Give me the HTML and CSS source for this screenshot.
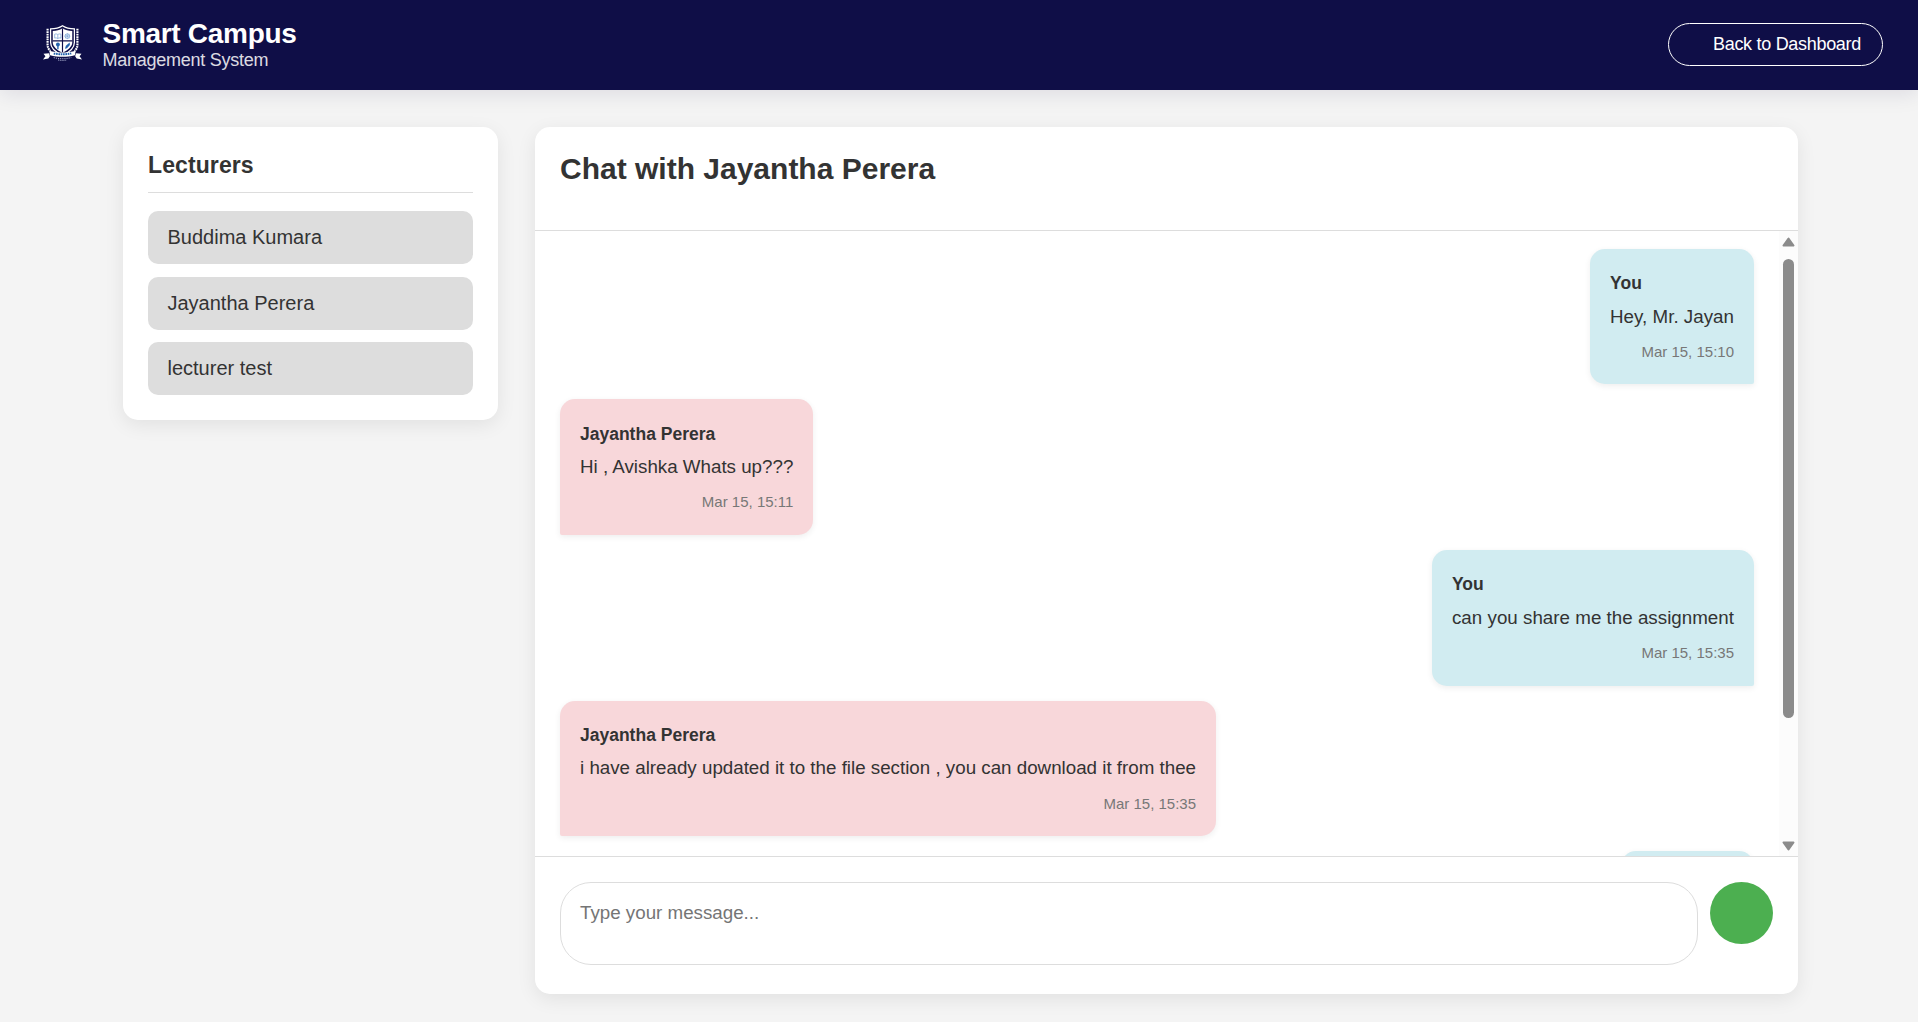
FILE: index.html
```html
<!DOCTYPE html>
<html lang="en">
<head>
<meta charset="utf-8">
<title>Smart Campus Management System</title>
<link rel="stylesheet" href="styles.css">
</head>
<body>
<header class="topbar">
  <div class="brand">
    <svg class="crest" viewBox="0 0 40 40" aria-hidden="true">
      <path d="M20 2.800C16 5.500 12 6 7.800 6V20c0 5.500 5 10 12.200 13C27.200 30 32.200 25.500 32.200 20V6C28 6 24 5.500 20 2.800z" fill="#0f0e47" stroke="#fff" stroke-width="1.300"/>
      <path d="M20 5.500C17 7.400 14 8.200 10 8.300V20c0 4 4.500 8 10 10.500 5.500-2.500 10-6.500 10-10.500V8.300C26 8.200 23 7.400 20 5.500z" fill="#fff"/>
      <path d="M20 5.500v25M9.800 18.300h20.400" stroke="#0f0e47" stroke-width="1.200"/>
      <path d="M12 11.500c1.200-.5 2.300-.3 3.200.4 1-.7 2-.9 3.200-.4v4c-1.200-.4-2.200-.2-3.200.4-1-.6-2-.8-3.200-.4zM15.200 12v4" fill="none" stroke="#6b9ad0" stroke-width=".7"/>
      <circle cx="25" cy="13.500" r="2.400" fill="none" stroke="#6b9ad0" stroke-width=".7"/>
      <path d="M22 13.500h6M25 10.500v6M22.800 11.500l4.400 4M27.200 11.500l-4.400 4" stroke="#6b9ad0" stroke-width=".5"/>
      <circle cx="15.300" cy="22" r="2" fill="#2463ad"/><path d="M15.300 23v4" stroke="#2463ad" stroke-width="1.400"/>
      <path d="M22.500 26.500l1-3.200 3.800-3.200.3 2.400-3 3.400z" fill="#2463ad"/>
      <path d="M4.700 6v16c0 3 1 5 3 6.500M35.300 6v16c0 3-1 5-3 6.500" fill="none" stroke="#fff" stroke-width="2.200" stroke-dasharray="1.800 .7"/>
      <path d="M6.300 31L.5 31.500l2 2.500-2.500 3.500 5.500-1 1.500-2.500zM33.700 31l5.800.5-2 2.500 2.500 3.500-5.500-1-1.500-2.500z" fill="#fff"/>
      <path d="M6.500 28.500c8 2.500 19 2.500 27 0l-.8 4.500c-8 2.200-17.400 2.200-25.400 0z" fill="#fff"/>
      <path d="M11 31.200c6 1.200 12 1.200 18 0" fill="none" stroke="#2463ad" stroke-width="2" stroke-dasharray="1.700 .7"/>
      <path d="M11 35.500c6 1.500 12 1.500 18 0M15.500 38c3 .5 6 .5 9 0" fill="none" stroke="#aab0cf" stroke-width="1" stroke-dasharray="1.200 1"/>
    </svg>
    <div class="brand-text">
      <div class="brand-name">Smart Campus</div>
      <div class="brand-sub">Management System</div>
    </div>
  </div>
  <a class="back">Back to Dashboard</a>
</header>
<main class="layout">
  <aside class="sidebar">
    <h2 class="sidebar-title">Lecturers</h2>
    <ul class="lecturers">
      <li class="lecturer">Buddima Kumara</li>
      <li class="lecturer">Jayantha Perera</li>
      <li class="lecturer">lecturer test</li>
    </ul>
  </aside>
  <section class="chat">
    <div class="chat-head"><h1 class="chat-title">Chat with Jayantha Perera</h1></div>
    <div class="chat-body">
      <div class="messages">
        <article class="message sent"><div class="author">You</div><div class="text">Hey, Mr. Jayan</div><div class="time">Mar 15, 15:10</div></article>
        <article class="message received"><div class="author">Jayantha Perera</div><div class="text">Hi , Avishka Whats up???</div><div class="time">Mar 15, 15:11</div></article>
        <article class="message sent"><div class="author">You</div><div class="text">can you share me the assignment</div><div class="time">Mar 15, 15:35</div></article>
        <article class="message received"><div class="author">Jayantha Perera</div><div class="text">i have already updated it to the file section , you can download it from thee</div><div class="time">Mar 15, 15:35</div></article>
        <article class="message sent clipped"></article>
      </div>
      <div class="scrollbar">
        <svg class="arrow" viewBox="0 0 13 10"><path d="M6.500 1.500L11.500 8.500H1.500z"/></svg>
        <div class="thumb"></div>
        <svg class="arrow arrow-down" viewBox="0 0 13 10"><path d="M6.500 8.500L11.500 1.500H1.500z"/></svg>
      </div>
    </div>
    <form class="composer">
      <textarea class="input" placeholder="Type your message..."></textarea>
      <button class="send" type="button" aria-label="Send"></button>
    </form>
  </section>
</main>
</body>
</html>
```
FILE: styles.css
```css
* { box-sizing: border-box; margin: 0; padding: 0; }
body {
  height: 1022px;
  overflow: hidden;
  background: #f4f4f4;
  color: #333;
  font-family: "Liberation Sans", Arial, sans-serif;
}
.topbar {
  height: 90px;
  padding: 0 35px 0 43px;
  display: flex;
  align-items: center;
  justify-content: space-between;
  background: #0f0e47;
  color: #fff;
  letter-spacing: -0.3px;
  box-shadow: 0 4px 20px rgba(15, 14, 71, 0.1);
}
.brand { display: flex; align-items: center; gap: 20.5px; margin-bottom: 2px; }
.crest { width: 39px; height: 39px; margin-top: -3px; }
.brand-name { font-size: 28px; line-height: 32px; font-weight: 700; }
.brand-sub { font-size: 18px; line-height: 20px; letter-spacing: -0.25px; opacity: 0.85; }
.back {
  width: 215px;
  height: 43px;
  margin-top: -1px;
  padding-right: 21px;
  border: 1px solid #fff;
  border-radius: 22px;
  font-size: 18px;
  line-height: 41px;
  text-align: right;
}
.layout {
  width: 1675px;
  margin: 37px 0 0 123px;
  display: grid;
  grid-template-columns: 375px 1263px;
  gap: 37px;
  align-items: start;
}
.sidebar, .chat {
  background: #fff;
  border-radius: 15px;
  box-shadow: 0 5px 19px rgba(0, 0, 0, 0.08);
}
.sidebar { height: 293px; padding: 25px; }
.sidebar-title {
  height: 41px;
  border-bottom: 1px solid #ddd;
  font-size: 23px;
  line-height: 27px;
  letter-spacing: 0.1px;
}
.lecturers { margin-top: 18px; display: grid; gap: 12.5px; list-style: none; }
.lecturer {
  height: 53px;
  padding-left: 19.5px;
  border-radius: 10px;
  background: #ddd;
  font-size: 20px;
  line-height: 52px;
}
.chat { height: 867px; display: flex; flex-direction: column; overflow: hidden; }
.chat-head { height: 104px; padding: 24px 25px; border-bottom: 1px solid #ddd; }
.chat-title { font-size: 30px; line-height: 35px; }
.chat-body { height: 625px; display: flex; }
.messages {
  flex: 1;
  height: 625px;
  padding: 17.8px 25px 0;
  display: flex;
  flex-direction: column;
  gap: 15px;
  overflow: hidden;
}
.message {
  flex: none;
  height: 135.6px;
  padding: 20.2px 20px 20px;
  border-radius: 15px;
  box-shadow: 0 2px 6px rgba(0, 0, 0, 0.07);
}
.sent { align-self: flex-end; background: #d1ecf1; border-bottom-right-radius: 2px; }
.received { align-self: flex-start; background: #f8d7da; border-bottom-left-radius: 2px; }
.clipped { width: 133px; }
.author { font-size: 17.5px; line-height: 28px; font-weight: 700; }
.text { margin-top: 4.6px; font-size: 18.75px; line-height: 30px; white-space: nowrap; }
.sent .text { letter-spacing: 0.02px; }
.time { margin-top: 8.15px; font-size: 15px; line-height: 24px; text-align: right; color: #777; }
.scrollbar {
  width: 19px;
  padding: 6px 0 5px;
  display: flex;
  flex-direction: column;
  align-items: center;
  background: #fcfcfc;
}
.arrow { width: 13px; height: 10px; fill: #8b8b8b; stroke: #8b8b8b; stroke-width: 2; stroke-linejoin: round; }
.thumb { width: 11px; height: 459px; margin-top: 12px; border-radius: 6px; background: #8b8b8b; }
.arrow-down { margin-top: auto; }
.composer { flex: 1; padding: 25px; border-top: 1px solid #ddd; display: flex; align-items: flex-start; gap: 12px; }
.input {
  width: 1138px;
  height: 83px;
  padding: 19px 19px;
  border: 1px solid #ddd;
  border-radius: 31px;
  outline: none;
  resize: none;
  font: 18.75px "Liberation Sans", Arial, sans-serif;
}
.input::placeholder { color: #757575; }
.send { width: 63px; height: 62px; border: 0; border-radius: 50%; background: #4caf50; }
```
